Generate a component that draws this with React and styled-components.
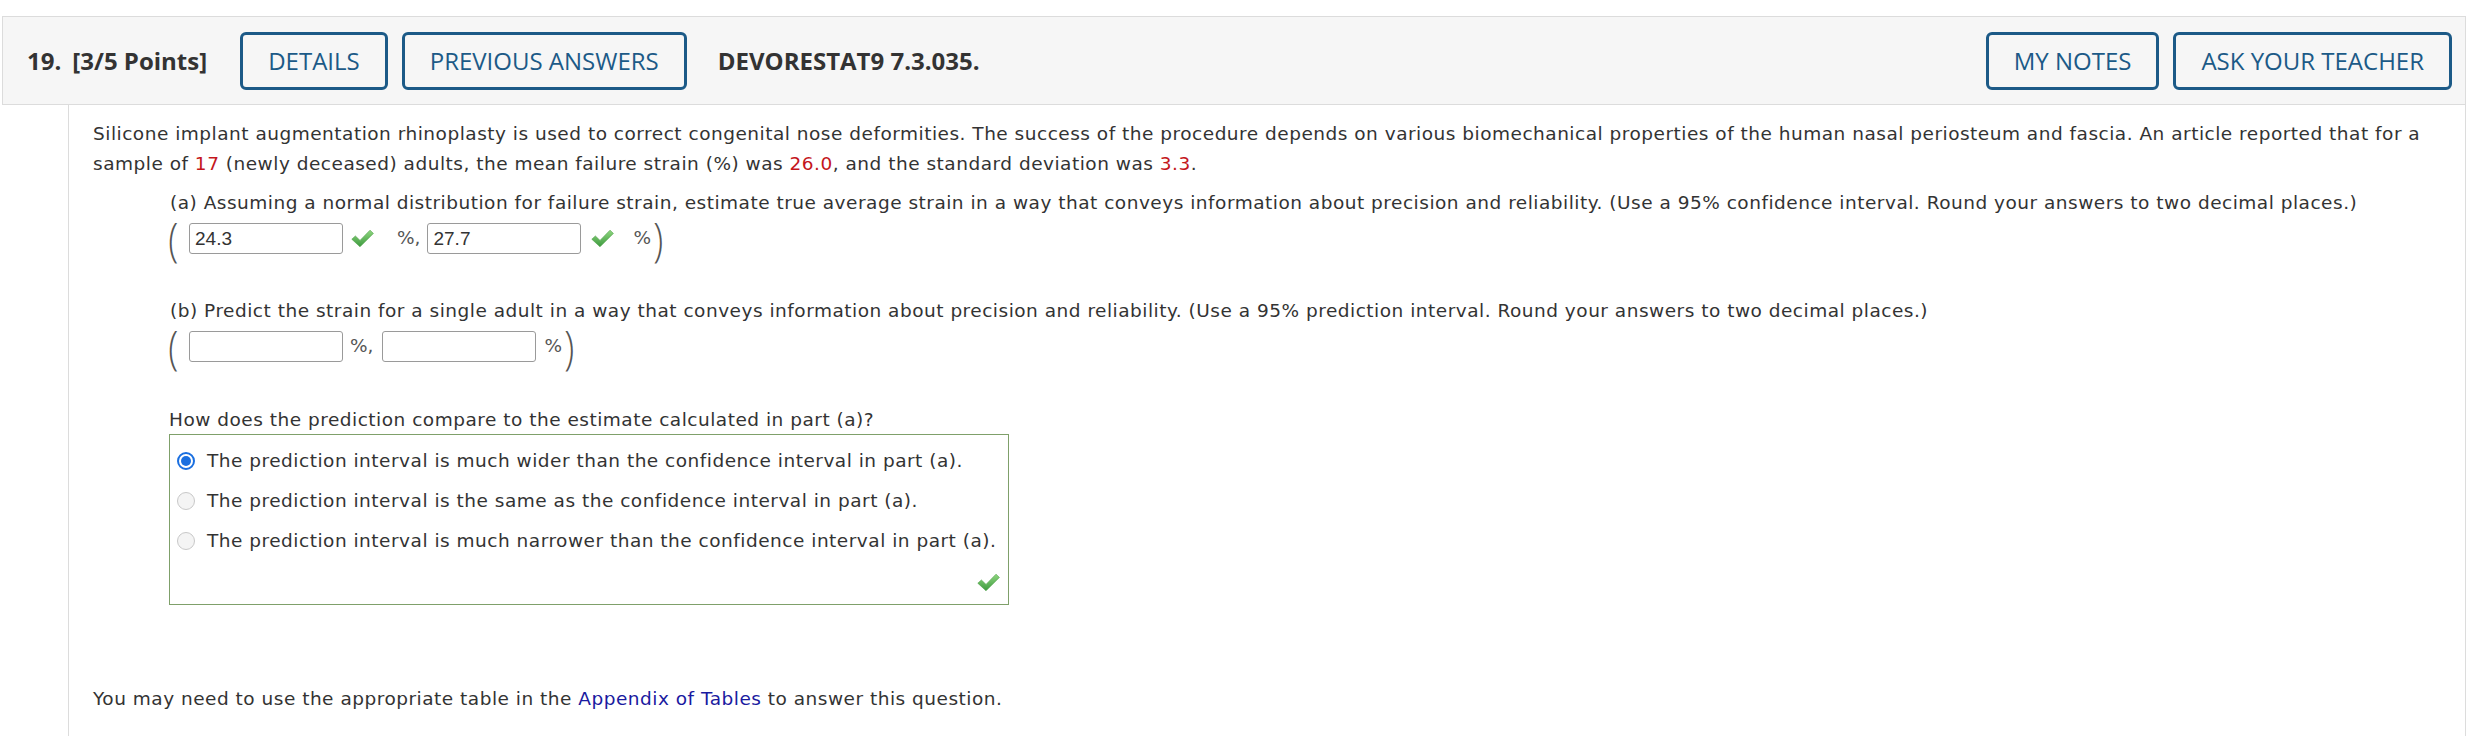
import React from "react";
import styled, { createGlobalStyle } from "styled-components";

const Global = createGlobalStyle`
  html, body { margin: 0; padding: 0; background: #ffffff; }
  body { font-family: "DejaVu Sans", Verdana, sans-serif; color: #333333; }
`;

const Page = styled.div`
  padding: 16px 12px 0 2px;
  height: 736px;
  box-sizing: border-box;
  overflow: hidden;
  display: flex;
  flex-direction: column;
`;

const Header = styled.div`
  height: 89px;
  box-sizing: border-box;
  border: 1px solid #dcdcdc;
  background: #f6f6f6;
  display: flex;
  align-items: center;
  padding: 0 13px 0 24px;
  font-family: "Open Sans", sans-serif;
  font-size: 24px;
`;

const Num = styled.span`
  font-weight: 700;
  color: #333;
  margin-right: 11px;
`;

const Points = styled.span`
  font-weight: 700;
  color: #333;
  margin-right: 33px;
`;

const Btn = styled.button`
  height: 58px;
  box-sizing: border-box;
  border: 3px solid #1c5a87;
  border-radius: 6px;
  background: transparent;
  color: #1c5a87;
  font-family: "Open Sans", sans-serif;
  font-size: 24px;
  padding: 0 25px;
  margin-right: 14px;
  cursor: pointer;
  &:last-child { margin-right: 0; }
`;

const Code = styled.span`
  font-weight: 700;
  color: #333;
  margin-left: 17px;
`;

const Right = styled.div`
  margin-left: auto;
  display: flex;
`;

const Body = styled.div`
  flex: 1;
  margin-left: 66px;
  border-left: 1px solid #dcdcdc;
  border-right: 1px solid #dcdcdc;
  padding: 14px 0 0 24px;
  font-size: 18.5px;
  letter-spacing: 0.5px;
  line-height: 30px;
`;

const Para = styled.p`
  margin: 0;
`;

const Red = styled.span`
  color: #c4161c;
`;

const Part = styled.div`
  margin-left: 77px;
  margin-top: ${(p) => p.$top}px;
`;

const AnswerRow = styled.div`
  display: flex;
  align-items: center;
  height: 40px;
  color: #555;
`;

const Paren = styled.span`
  font-family: "Open Sans", sans-serif;
  font-weight: 300;
  font-size: 46px;
  line-height: 40px;
  color: #555;
  transform: scaleX(0.8);
  margin: ${(p) => (p.$close ? "0 0 0 1px" : "0 9px 0 -3px")};
`;

const Input = styled.input`
  width: 154px;
  height: 31px;
  box-sizing: border-box;
  border: 1px solid #9a9a9a;
  border-radius: 3px;
  background: #fff;
  font-family: "Liberation Sans", Arial, sans-serif;
  font-size: 19px;
  color: #333;
  padding: 2px 5px 0;
  outline: none;
`;

const Unit = styled.span`
  margin-left: ${(p) => p.$ml}px;
  margin-right: ${(p) => p.$mr}px;
  white-space: pre;
  letter-spacing: 0;
`;

const CheckSvg = styled.svg`
  flex: none;
  margin: ${(p) => p.$m};
`;

function Check({ m = "0 15px 0 8px" }) {
  const id = React.useId().replace(/:/g, "");
  return (
    <CheckSvg $m={m} width="23" height="19" viewBox="0 0 23 19">
      <defs>
        <linearGradient id={id} x1="0" y1="0" x2="0" y2="1">
          <stop offset="0" stopColor="#8fd67f" />
          <stop offset="1" stopColor="#3d9a3f" />
        </linearGradient>
      </defs>
      <path
        d="M0.8 10.2 L4.4 7 L9 11.4 L19 1.2 L22.4 4.4 L9 17.8 Z"
        fill={`url(#${id})`}
        stroke="#4b9f45"
        strokeWidth="0.6"
        strokeLinejoin="round"
      />
    </CheckSvg>
  );
}

const Question = styled.div`
  margin-left: 76px;
  margin-top: 39px;
`;

const ChoiceBox = styled.div`
  width: 840px;
  box-sizing: border-box;
  border: 1px solid #7fa06a;
  margin-top: -1px;
  padding: 6px 0 12px 7px;
  display: flex;
  flex-direction: column;
`;

const Choice = styled.label`
  display: flex;
  align-items: center;
  height: 40px;
  gap: 12px;
  color: #333;
`;

const Radio = styled.span`
  width: 18px;
  height: 18px;
  box-sizing: border-box;
  border-radius: 50%;
  flex: none;
  position: relative;
  border: ${(p) => (p.$on ? "2px solid #1a6fe0" : "1px solid #c8c8c8")};
  background: ${(p) => (p.$on ? "#fff" : "#f4f4f4")};
  &::after {
    content: "";
    display: ${(p) => (p.$on ? "block" : "none")};
    position: absolute;
    left: 2px;
    top: 2px;
    width: 10px;
    height: 10px;
    border-radius: 50%;
    background: #1a6fe0;
  }
`;

const BoxCheck = styled.div`
  display: flex;
  justify-content: flex-end;
  padding-right: 8px;
  margin-top: 12px;
`;

const Footer = styled.p`
  margin: 79px 0 0;
`;

const Link = styled.a`
  color: #1a1aa0;
  text-decoration: none;
`;

export default function App() {
  return (
    <>
      <Global />
      <Page>
        <Header>
          <Num>19.</Num>
          <Points>[3/5 Points]</Points>
          <Btn>DETAILS</Btn>
          <Btn>PREVIOUS ANSWERS</Btn>
          <Code>DEVORESTAT9 7.3.035.</Code>
          <Right>
            <Btn>MY NOTES</Btn>
            <Btn>ASK YOUR TEACHER</Btn>
          </Right>
        </Header>
        <Body>
          <Para>
            Silicone implant augmentation rhinoplasty is used to correct congenital nose deformities. The success of the procedure depends on various biomechanical properties of the human nasal periosteum and fascia. An article reported that for a
            <br />
            sample of <Red>17</Red> (newly deceased) adults, the mean failure strain (%) was <Red>26.0</Red>, and the standard deviation was <Red>3.3</Red>.
          </Para>
          <Part $top={9}>
            <Para>
              (a) Assuming a normal distribution for failure strain, estimate true average strain in a way that conveys information about precision and reliability. (Use a 95% confidence interval. Round your answers to two decimal places.)
            </Para>
            <AnswerRow>
              <Paren>(</Paren>
              <Input defaultValue="24.3" />
              <Check />
              <Unit $ml={8} $mr={7}>%,</Unit>
              <Input defaultValue="27.7" />
              <Check m="0 19px 0 10px" />
              <Unit $ml={0} $mr={0}>%</Unit>
              <Paren $close>)</Paren>
            </AnswerRow>
          </Part>
          <Part $top={38}>
            <Para>
              (b) Predict the strain for a single adult in a way that conveys information about precision and reliability. (Use a 95% prediction interval. Round your answers to two decimal places.)
            </Para>
            <AnswerRow>
              <Paren>(</Paren>
              <Input />
              <Unit $ml={7} $mr={9}>%,</Unit>
              <Input />
              <Unit $ml={8} $mr={0}>%</Unit>
              <Paren $close>)</Paren>
            </AnswerRow>
          </Part>
          <Question>
            <Para>How does the prediction compare to the estimate calculated in part (a)?</Para>
            <ChoiceBox>
              <Choice>
                <Radio $on />
                The prediction interval is much wider than the confidence interval in part (a).
              </Choice>
              <Choice>
                <Radio />
                The prediction interval is the same as the confidence interval in part (a).
              </Choice>
              <Choice>
                <Radio />
                The prediction interval is much narrower than the confidence interval in part (a).
              </Choice>
              <BoxCheck>
                <Check m="0" />
              </BoxCheck>
            </ChoiceBox>
          </Question>
          <Footer>
            You may need to use the appropriate table in the <Link href="#">Appendix of Tables</Link> to answer this question.
          </Footer>
        </Body>
      </Page>
    </>
  );
}
